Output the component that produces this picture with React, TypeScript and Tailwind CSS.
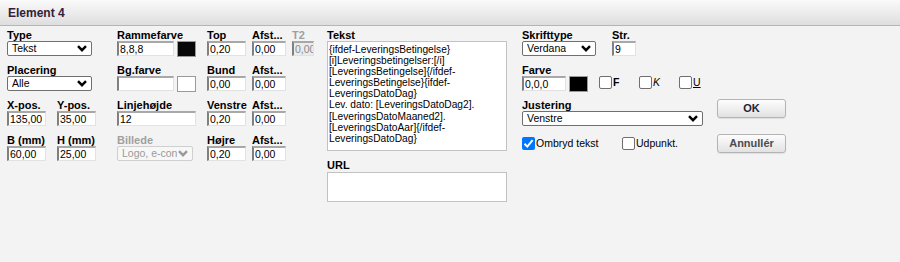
import type { ReactNode } from "react";

// Elementdialog: felter for tekst-element i layout-editor

const textLines = [
  "{ifdef-LeveringsBetingelse}",
  "[i]Leveringsbetingelser:[/i]",
  "[LeveringsBetingelse]{/ifdef-",
  "LeveringsBetingelse}{ifdef-",
  "LeveringsDatoDag}",
  "Lev. dato: [LeveringsDatoDag2].",
  "[LeveringsDatoMaaned2].",
  "[LeveringsDatoAar]{/ifdef-",
  "LeveringsDatoDag}",
];

function Chevron({ muted }: { muted?: boolean }) {
  return (
    <svg width="10" height="7" viewBox="0 0 10 7" className="shrink-0">
      <path
        d="M1 1.2 L5 5.2 L9 1.2"
        fill="none"
        stroke={muted ? "#9a9a9a" : "#000"}
        strokeWidth="2.4"
      />
    </svg>
  );
}

function Label({ children, muted }: { children: ReactNode; muted?: boolean }) {
  return (
    <div
      className={`h-[11px] text-[11px] leading-[11px] font-bold whitespace-nowrap ${
        muted ? "text-[#a0a0a0]" : "text-black"
      }`}
    >
      {children}
    </div>
  );
}

function Field({
  label,
  muted,
  w,
  children,
}: {
  label: string;
  muted?: boolean;
  w?: string;
  children: ReactNode;
}) {
  return (
    <div className={`flex h-[35px] flex-col ${w ?? ""}`}>
      <Label muted={muted}>{label}</Label>
      {children}
    </div>
  );
}

function TextBox({ value, w, disabled }: { value: string; w: string; disabled?: boolean }) {
  return (
    <div
      className={`${w} flex h-[15px] items-center overflow-hidden border-t-2 border-l-2 border-r border-b border-t-[#a8a8a8] border-l-[#808080] border-r-[#e2e2e2] border-b-[#e2e2e2] pl-[1px] text-[10.5px] leading-none whitespace-nowrap ${
        disabled ? "bg-[#ececec] text-[#8a8a8a]" : "bg-white text-black"
      }`}
    >
      {value}
    </div>
  );
}

function Select({ value, w, disabled }: { value: string; w: string; disabled?: boolean }) {
  return (
    <div
      className={`${w} flex h-[15px] items-center justify-between overflow-hidden rounded-[2px] border pr-[4px] pl-[4px] text-[10.5px] leading-none whitespace-nowrap ${
        disabled
          ? "border-[#cfcfcf] bg-[#f7f7f7] text-[#9a9a9a]"
          : "border-[#6f6f6f] bg-white text-black"
      }`}
    >
      <span className="overflow-hidden">{value}</span>
      <Chevron muted={disabled} />
    </div>
  );
}

function Swatch({ color }: { color: string }) {
  return <div className={`ml-[3px] h-[16px] w-[19px] border border-[#9a9a9a] ${color}`} />;
}

function Check({ checked, children }: { checked?: boolean; children: ReactNode }) {
  return (
    <div className="flex items-center text-[10.5px] leading-none text-black">
      {checked ? (
        <div className="flex h-[13px] w-[13px] items-center justify-center rounded-[2px] bg-[#0075ff]">
          <svg width="11" height="11" viewBox="0 0 11 11">
            <path d="M1.5 5.8 L4.3 8.6 L9.6 2.2" fill="none" stroke="#fff" strokeWidth="2" />
          </svg>
        </div>
      ) : (
        <div className="h-[13px] w-[13px] rounded-[2px] border border-[#6f6f6f] bg-white" />
      )}
      <span className="ml-[1px]">{children}</span>
    </div>
  );
}

function Button({ children, dark }: { children: ReactNode; dark?: boolean }) {
  return (
    <div
      className={`flex h-[19px] w-[69px] items-center justify-center rounded-[3px] border border-[#b4b4b4] bg-gradient-to-b from-[#fdfdfd] to-[#e2e2e2] text-[11px] font-bold shadow-[0_1px_1px_rgba(0,0,0,0.08)] ${
        dark ? "text-[#1c2438]" : "text-[#4c4c4c]"
      }`}
    >
      {children}
    </div>
  );
}

export default function App() {
  return (
    <div className="h-[262px] w-[900px] bg-[#f3f3f3] font-['Liberation_Sans',Arial,sans-serif]">
      <div className="flex h-[26px] items-center border-b border-[#b5b5b5] bg-gradient-to-b from-[#fafafa] to-[#dedede] pl-[8px]">
        <span className="text-[12px] font-bold text-[#33203a]">Element 4</span>
      </div>

      <div className="flex pt-[4px] pl-[7px]">
        {/* kolonne 1 */}
        <div className="flex w-[110px] flex-col">
          <Field label="Type">
            <Select value="Tekst" w="w-[85px]" />
          </Field>
          <Field label="Placering">
            <Select value="Alle" w="w-[85px]" />
          </Field>
          <div className="flex">
            <Field label="X-pos." w="w-[50px]">
              <TextBox value="135,00" w="w-[39px]" />
            </Field>
            <Field label="Y-pos.">
              <TextBox value="35,00" w="w-[39px]" />
            </Field>
          </div>
          <div className="flex">
            <Field label="B (mm)" w="w-[50px]">
              <TextBox value="60,00" w="w-[39px]" />
            </Field>
            <Field label="H (mm)">
              <TextBox value="25,00" w="w-[39px]" />
            </Field>
          </div>
        </div>

        {/* kolonne 2 */}
        <div className="flex w-[90px] flex-col">
          <Field label="Rammefarve">
            <div className="flex">
              <TextBox value="8,8,8" w="w-[57px]" />
              <Swatch color="bg-[#080808]" />
            </div>
          </Field>
          <Field label="Bg.farve">
            <div className="flex">
              <TextBox value="" w="w-[57px]" />
              <Swatch color="bg-white" />
            </div>
          </Field>
          <Field label="Linjehøjde">
            <TextBox value="12" w="w-[79px]" />
          </Field>
          <Field label="Billede" muted>
            <Select value="Logo, e-con" w="w-[76px]" disabled />
          </Field>
        </div>

        {/* kolonne 3: margener */}
        <div className="flex w-[120px] flex-col">
          {[
            ["Top", "0,20", "0,00"],
            ["Bund", "0,00", "0,00"],
            ["Venstre", "0,20", "0,00"],
            ["Højre", "0,20", "0,00"],
          ].map(([name, val, afst], i) => (
            <div key={name} className="flex">
              <Field label={name} w="w-[45px]">
                <TextBox value={val} w="w-[39px]" />
              </Field>
              <Field label="Afst..." w="w-[40px]">
                <TextBox value={afst} w="w-[34px]" />
              </Field>
              {i === 0 && (
                <Field label="T2" muted>
                  <TextBox value="0,00" w="w-[22px]" disabled />
                </Field>
              )}
            </div>
          ))}
        </div>

        {/* kolonne 4: tekst og url */}
        <div className="flex w-[195px] flex-col">
          <Label>Tekst</Label>
          <div className="h-[110px] w-[180px] border border-[#c2c2c2] bg-white pt-[2px] pl-[1px] text-[10.2px] leading-[11.1px] whitespace-pre text-black">
            {textLines.map((line, i) => (
              <div key={i}>{line}</div>
            ))}
          </div>
          <div className="mt-[9px]">
            <Label>URL</Label>
          </div>
          <div className="mt-[1px] h-[30px] w-[180px] border border-[#c2c2c2] bg-white" />
        </div>

        {/* kolonne 5: skrift */}
        <div className="flex w-[195px] flex-col">
          <div className="flex">
            <Field label="Skrifttype" w="w-[90px]">
              <Select value="Verdana" w="w-[74px]" />
            </Field>
            <Field label="Str.">
              <TextBox value="9" w="w-[24px]" />
            </Field>
          </div>
          <Field label="Farve">
            <div className="flex items-start">
              <TextBox value="0,0,0" w="w-[44px]" />
              <Swatch color="bg-[#000]" />
              <div className="ml-[11px] flex w-[40px]">
                <Check>
                  <span className="font-bold">F</span>
                </Check>
              </div>
              <div className="flex w-[40px]">
                <Check>
                  <span className="italic">K</span>
                </Check>
              </div>
              <Check>
                <span className="underline">U</span>
              </Check>
            </div>
          </Field>
          <Field label="Justering">
            <Select value="Venstre" w="w-[181px]" />
          </Field>
          <div className="mt-[2px] flex">
            <div className="w-[100px]">
              <Check checked>Ombryd tekst</Check>
            </div>
            <Check>Udpunkt.</Check>
          </div>
        </div>

        {/* knapper */}
        <div className="flex flex-col gap-[16px] pt-[69px]">
          <Button dark>OK</Button>
          <Button>Annullér</Button>
        </div>
      </div>
    </div>
  );
}
